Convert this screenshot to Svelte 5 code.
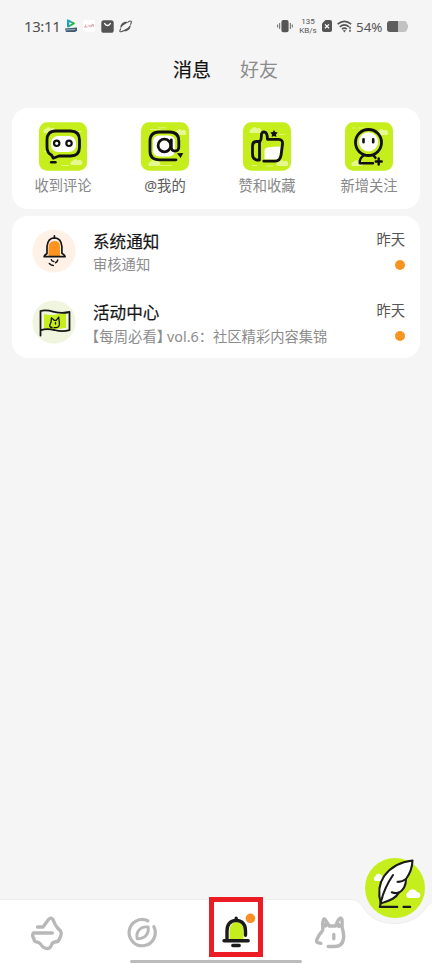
<script lang="ts">
  type Shortcut = { id: string; label: string; dark?: boolean };
  type Message = { id: string; title: string; tag?: string; text: string; time: string };

  const shortcuts: Shortcut[] = [
    { id: 'comment', label: '收到评论' },
    { id: 'at', label: '@我的', dark: true },
    { id: 'like', label: '赞和收藏' },
    { id: 'follow', label: '新增关注' }
  ];

  const messages: Message[] = [
    { id: 'system', title: '系统通知', text: '审核通知', time: '昨天' },
    { id: 'activity', title: '活动中心', tag: '【每周必看】', text: 'vol.6：社区精彩内容集锦', time: '昨天' }
  ];
</script>

{#snippet cloud(x: number, y: number)}
  <path
    transform="translate({x} {y})"
    d="M1 6a2.4 2.4 0 0 1 1.6-4A3.2 3.2 0 0 1 8 1.4 2.6 2.6 0 0 1 11 6z"
    fill="#e6f98e"
  />
{/snippet}

<div class="screen">
  <header class="status">
    <div class="status-left">
      <span class="clock">13:11</span>
      <svg class="app-a" width="14" height="14" viewBox="0 0 14 14">
        <path d="M3 1.2 Q3 .3 4.2.7L10.4 3.6Q11.5 4.5 10.4 5.3L5 8.2Q3 8.8 3 7z" fill="#27b83f" />
        <path d="M3 1.2 Q3 .3 4.2.7L7 2 4.8 8.2Q3 8.8 3 7z" fill="#169de0" />
        <path d="M5.3 3v3l2.7-1.5z" fill="#fff" />
        <path d="M1 9.4l12-1v3.3L11 13H2z" fill="#405b70" />
        <path d="M2 11l9-.5" stroke="#9cb2bf" stroke-width="1" />
      </svg>
      <svg class="app-b" width="12" height="12" viewBox="0 0 12 12">
        <rect width="12" height="12" rx="2" fill="#fff" />
        <path d="M1.5 7.5L3 4.5M2 7h2.4M5 6.6l1-1.2 1 1.2 1-1.4M8 7.2l1.6-3.4M10.2 4v3" fill="none" stroke="#d9858b" stroke-width=".8" />
      </svg>
      <svg class="app-c" width="13" height="13" viewBox="0 0 13 13">
        <rect x=".3" y=".2" width="12.4" height="12.6" rx="2.6" fill="#545454" />
        <path d="M3.7 3.6q2.8 3.8 5.6 0" fill="none" stroke="#fff" stroke-width="1.4" stroke-linecap="round" />
      </svg>
      <svg class="app-d" width="13" height="13" viewBox="0 0 13 13">
        <path d="M1.5 8.200C.8 3 6 .4 9.500 2.200L7.500 3.200Q4 4.500 1.500 8.200zM11.500 4.800c.7 5.200-4.500 7.800-8 6L5.500 9.800Q9 8.500 11.500 4.800z" fill="#555" />
        <path d="M2 8.500Q-.3 11.800 1.800 11.800 2.800 11.900 4.500 10.800M9 1.900Q11.500.5 12.200 1.300q.5 1-.8 3.500" fill="none" stroke="#555" stroke-width="1.100" />
      </svg>
    </div>
    <div class="status-right">
      <svg class="vibrate" width="16" height="14" viewBox="0 0 16 14">
        <rect x="4.4" y="1" width="7.2" height="12.2" rx="2" fill="#555" />
        <path d="M2.7 4v6M.7 5.5v3M13.3 4v6M15.3 5.5v3" stroke="#666" stroke-width="1" />
      </svg>
      <div class="speed"><span>135</span><span>KB/s</span></div>
      <svg class="sim" width="10" height="12" viewBox="0 0 10 12">
        <path d="M3.5 0H8q2 0 2 2v8q0 2-2 2H2q-2 0-2-2V3.6z" fill="#555" />
        <path d="M3 4.4l4 3.8M7 4.4L3 8.2" stroke="#fff" stroke-width="1.3" />
      </svg>
      <svg class="wifi" width="15" height="13" viewBox="0 0 15 13">
        <g fill="none" stroke="#555" stroke-width="1.6">
          <path d="M.6 4.2q6.7-5.7 13.6 0M2.8 6.8q4.6-4 9.2 0M5 9.1q2.4-2 4.8 0" />
        </g>
        <path d="M5.8 10.3h3.2L7.4 12.4z" fill="#555" />
        <path d="M13 6.8v5" stroke="#555" stroke-width="1.6" stroke-dasharray="2 1" />
      </svg>
      <span class="percent">54%</span>
      <svg class="battery" width="21" height="11" viewBox="0 0 21 11">
        <path d="M3 0h14q3 0 3 2.7l1 1.3v3l-1 1.3Q20 11 17 11H3Q0 11 0 8V3Q0 0 3 0z" fill="#c2c2c2" />
        <path d="M3 0h8v11H3Q0 11 0 8V3Q0 0 3 0z" fill="#5d5d5d" />
      </svg>
    </div>
  </header>

  <nav class="tabs">
    <span class="tab active">消息</span>
    <span class="tab">好友</span>
  </nav>

  <section class="card shortcuts">
    {#each shortcuts as s (s.id)}
      <div class="shortcut">
        <svg width="48" height="49" viewBox="0 0 48 49">
          <rect y=".3" width="48" height="48.4" rx="8" fill="#c5ee1c" />
          {#if s.id === 'comment'}
            {@render cloud(4, 5)}
            {@render cloud(31, 37)}
            <path d="M34 9.5h9M5 29.5h5M22 43.5h8" stroke="#e6f993" stroke-width=".8" />
            <rect x="12" y="14" width="25" height="16" rx="7" fill="#fff" />
            <path d="M16.500 9h15q9 0 9 9v7q0 9-9 9H20l-5.800 2.200L12.500 33q-4.500-2-4.500-8v-7Q8 9 16.500 9z" fill="none" stroke="#111" stroke-width="2.800" stroke-linejoin="round" />
            <circle cx="17.700" cy="21.300" r="2.700" fill="#fff" stroke="#111" stroke-width="2.200" />
            <circle cx="30" cy="21.300" r="2.700" fill="#fff" stroke="#111" stroke-width="2.200" />
            <path d="M12.200 40.200h4.200" stroke="#111" stroke-width="2.600" stroke-linecap="round" />
          {:else if s.id === 'at'}
            {@render cloud(33, 7)}
            {@render cloud(7, 38)}
            <path d="M9 7.500h11M17 5.800h8M19 43.500h12" stroke="#e6f993" stroke-width=".8" />
            <rect x="12" y="13.500" width="22" height="21" rx="6" fill="#fff" />
            <path d="M35 37.800H18.500q-9.500 0-9.500-8.500V19Q9 10 18 10H28.500q9.300 0 9.300 9v6q0 4-3.800 4-3.700 0-3.700-4v-7" fill="none" stroke="#111" stroke-width="2.800" stroke-linecap="round" />
            <circle cx="23.400" cy="23.500" r="6.300" fill="none" stroke="#111" stroke-width="2.800" />
            <path d="M35.900 31.200l6.400-.3-2.700 5.100z" fill="#111" />
          {:else if s.id === 'like'}
            {@render cloud(6, 5)}
            {@render cloud(33, 38)}
            <path d="M36 12.500h6M9 43.500h5M23 44h7" stroke="#e6f993" stroke-width=".8" />
            <path d="M21.500 37.500V29q-.2-3 3-3.600 6-1 13.500-1l-2.300 13z" fill="#fff" />
            <path d="M16.500 19.500V38M16.500 19.500h-3q-4 0-4 4.500v8q0 5 4 6h3M16.500 20.500q2-2.500 1.900-7-.1-3.500 2.700-3.500 3.400 0 3.300 7.300H35.500q4.500.3 4 4.700L38.100 33q-1 6-6 6.200H20.800" fill="none" stroke="#111" stroke-width="2.800" stroke-linecap="round" stroke-linejoin="round" />
            <path d="M31 8l1.200 2 2.500.6-1.700 1.800.3 2.500-2.300-1-2.300 1 .3-2.500-1.700-1.800 2.500-.6z" fill="#111" />
          {:else}
            {@render cloud(31, 7)}
            {@render cloud(6, 38)}
            <path d="M7 6h4M13 6h7" stroke="#e6f993" stroke-width=".8" />
            <circle cx="23.500" cy="19.800" r="9.600" fill="#fff" />
            <circle cx="23.500" cy="20.500" r="13" fill="none" stroke="#111" stroke-width="2.800" />
            <path d="M18.500 17.200v3M28.200 17.200v3" stroke="#111" stroke-width="2.600" stroke-linecap="round" />
            <path d="M18.500 33.500q-4 2.500-3.800 7.800h13.300M28.500 33.500q1.200 1 2 2.400M33.700 36.500v6M30.700 39.500h6" fill="none" stroke="#111" stroke-width="2.400" stroke-linecap="round" stroke-linejoin="round" />
          {/if}
        </svg>
        <span class="shortcut-label" class:dark={s.dark}>{s.label}</span>
      </div>
    {/each}
  </section>

  <section class="card messages">
    {#each messages as m (m.id)}
      <article class="message">
        <svg class="avatar" width="44" height="44" viewBox="0 0 44 44">
          {#if m.id === 'system'}
            <circle cx="22" cy="22" r="21.600" fill="#fff1e5" />
            <path d="M16.500 27.500V19q0-7 6-7t5.500 7v8.500z" fill="#ff9420" />
            <path d="M22.400 6.800v2M15 24.500q-2.600 1.700-2.900 3.200h21q-.3-1.500-3.200-3.400V17.500q-.7-8.400-7.500-8.700-6.700.3-7.400 8.700z" fill="none" stroke="#171717" stroke-width="1.700" stroke-linejoin="round" stroke-linecap="round" />
            <path d="M19.300 30.600q.5 1.800 2.500 1.800M17.300 34.500q1.500 1.800 4 1.900M23.500 33.800q1.800-.8 2.200-2.700" fill="none" stroke="#171717" stroke-width="1.500" stroke-linecap="round" />
          {:else}
            <circle cx="22" cy="22" r="21.600" fill="#f0f5e0" />
            <path d="M12 14q9 2.500 22-1.500v15.300q-11 2.500-22 .7z" fill="#c5ee1c" />
            <path d="M8.500 35.600V11q5-1.500 13.500.8 8 2 15.500.2v18.200q-7.500 2-15-.2-8-1.800-14 .3" fill="none" stroke="#171717" stroke-width="1.800" stroke-linecap="round" stroke-linejoin="round" />
            <path d="M20 27.500q-2.600-.3-2.200-2.500l1.200-2.800.4-4.400 2.800 2.500 2 0 2.500-3.200.5 4.400q1.200 6-3.200 6.200h-2M23.500 22.500v1.500" fill="none" stroke="#171717" stroke-width="1.300" stroke-linecap="round" stroke-linejoin="round" />
          {/if}
        </svg>
        <div class="body">
          <div class="title">{m.title}</div>
          <div class="text">
            {#if m.tag}<span class="tag">{m.tag}</span>{/if}{m.text}
          </div>
        </div>
        <div class="meta">
          <span class="time">{m.time}</span>
          <span class="dot"></span>
        </div>
      </article>
    {/each}
  </section>

  <div class="spacer"></div>

  <footer class="bottom">
    <svg class="bar-shape" width="432" height="65" viewBox="0 0 432 65">
      <path d="M-2 .5H350c7 0 10 3 13.500 8.500 7 11 18 15.500 31.500 15.500s24-5.500 31-15.500c2-3 4-5.500 8-7V67H-2z" fill="#fff" stroke="#eee" stroke-width="1" />
    </svg>

    <svg class="nav-icon" width="40" height="40" viewBox="27 913 40 40">
      <path d="M37.500 927h5.500l5.500-7.500q2.500-3 4.700.5 1.800 5 4 7.500l3.300 3.500q1.300 2 .4 4.500l-1.700 4q-1 2.500-4.200 2.500-3 .3-3.700 3.500-1.600 4.300-6.500 2.500-2.800-1.200-4.300-4-1.500-2-4-2-2.500-.5-2.500-3-2.400-3.500-.6-6h19" fill="none" stroke="#b8b8b8" stroke-width="3.300" stroke-linecap="round" stroke-linejoin="round" />
    </svg>

    <svg class="nav-icon" width="40" height="40" viewBox="121.500 913 40 40">
      <path d="M147.300 920.800A13.100 13.100 0 1 0 153.300 926.600" fill="none" stroke="#b8b8b8" stroke-width="3.200" stroke-linecap="round" />
      <path d="M147.700 927q-6.500-.8-9.500 3.500-2.700 3.500-1.500 8.300 6.500-.2 9.300-4 2.400-3.300 1.700-7.800z" fill="none" stroke="#b8b8b8" stroke-width="2.900" stroke-linecap="round" stroke-linejoin="round" />
    </svg>

    <div class="highlight">
      <svg width="44" height="50" viewBox="214 902 44 50">
        <path d="M229.500 939v-8.500q.5-8 7-8.500 6.800.5 7 8.500V939z" fill="#c5ee1c" />
        <path d="M227 938.500V931q0-10 9.200-10.600 9.300.6 9.300 10.600v4.300M236.200 918.200v1M224 940.700h24.200M232.800 945.500h6.400" fill="none" stroke="#1b1b1b" stroke-width="3.400" stroke-linecap="round" stroke-linejoin="round" />
        <circle cx="250.400" cy="918.300" r="4.800" fill="#fa8f25" />
      </svg>
    </div>

    <svg class="nav-icon" width="40" height="40" viewBox="310 913 40 40">
      <path d="M320.800 943.300l-3-.7q-2-.9-.8-3.300 1.500-4.300 5-7.800 1.300-1.300.8-4-.8-4.800.8-8 .6-1.200 1.800.3l3.800 6.200h6.300l2.300-5q1.500-3 3-2.800 1.400.5 1.300 3.300v6q1.600 4.800 1.600 9-.3 10-9 10h-6.500M333.800 934.500v4.200M338.800 926.500v-2M325.500 926v-1.500" fill="none" stroke="#b8b8b8" stroke-width="3.400" stroke-linecap="round" stroke-linejoin="round" />
    </svg>

    <div class="home-bar"></div>

    <svg class="fab" width="62" height="66" viewBox="364 856 62 66">
      <circle cx="395" cy="888" r="30" fill="#c5ee1c" />
      <path d="M375 881a2.800 2.800 0 0 1 .3-4.700 3.600 3.600 0 0 1 6.500-1V881zM408 898a3.200 3.200 0 0 1 0-5.800 5 5 0 0 1 9-.3 3.100 3.100 0 0 1 1 6.100z" fill="#fff" />
      <path d="M380.800 903.500c-3-11-1.800-20 3.400-27.500 6.500-9 16.800-14.200 28.300-15.500-.3 7.500-2.800 13.500-6.500 18.500 0 6-3 11.500-7.500 14-2.500 5.500-9.500 7.500-17.700 10.500z" fill="#fff" stroke="#1b1b1b" stroke-width="2.100" stroke-linejoin="round" />
      <path d="M393 875q-8.500 12.500-12 26.500l-1.200 5.400h17.500M403.500 906.900h6.700M397.500 881.800q4 .5 8.500-2.800M391.800 892.300q3.500 1.500 6.700.2" fill="none" stroke="#1b1b1b" stroke-width="2.100" stroke-linecap="round" stroke-linejoin="round" />
    </svg>
  </footer>
</div>

<style>
  :global(body) {
    background: #f5f5f5;
  }

  .screen {
    display: flex;
    flex-direction: column;
    box-sizing: border-box;
    width: 432px;
    height: 964px;
    overflow: hidden;
    background: #f5f5f5;
    font-family: 'Noto Sans', 'Noto Sans CJK SC', sans-serif;
  }

  svg {
    display: block;
    flex: none;
  }

  .status {
    display: flex;
    justify-content: space-between;
    height: 52px;
    padding: 0 24px;
    color: #555;
  }

  .status-left,
  .status-right {
    display: flex;
    align-items: center;
  }

  .clock {
    width: 35px;
    font-size: 15px;
    letter-spacing: -0.4px;
    color: #505050;
    white-space: nowrap;
  }

  .app-a,
  .app-b {
    margin-left: 5px;
  }

  .app-c {
    margin-left: 6px;
  }

  .app-d {
    margin-left: 5px;
  }

  .speed {
    display: flex;
    flex-direction: column;
    align-items: center;
    width: 18px;
    margin: 0 5px 0 6px;
    font-family: Roboto, 'Noto Sans', sans-serif;
    font-size: 8px;
    line-height: 9px;
  }

  .wifi {
    margin-left: 5px;
  }

  .percent {
    width: 27px;
    margin: 1px 4px 0 4px;
    font-size: 13.4px;
    white-space: nowrap;
  }

  .tabs {
    display: flex;
    justify-content: center;
    gap: 29px;
    height: 56px;
    padding-left: 19px;
  }

  .tab {
    margin-top: 4px;
    font-size: 19px;
    line-height: 28px;
    color: #8c8c8c;
  }

  .tab.active {
    color: #111;
    -webkit-text-stroke: 0.2px #111;
  }

  .card {
    margin: 0 12px;
    border-radius: 16px;
    background: #fff;
  }

  .shortcuts {
    display: grid;
    grid-template-columns: repeat(4, 1fr);
    height: 101px;
  }

  .shortcut {
    display: flex;
    flex-direction: column;
    align-items: center;
    padding-top: 14px;
  }

  .shortcut-label {
    margin-top: 5px;
    font-size: 14.3px;
    line-height: 20px;
    color: #888;
  }

  .shortcut-label.dark {
    color: #5c5c5c;
  }

  .messages {
    height: 142px;
    margin-top: 7px;
  }

  .message {
    display: flex;
    height: 71px;
    box-sizing: border-box;
    padding: 13px 15px 0 20px;
  }

  .body {
    flex: 1;
    margin-left: 17px;
  }

  .title {
    margin-top: 1px;
    font-size: 16.6px;
    line-height: 24px;
    color: #151515;
    -webkit-text-stroke: 0.2px #151515;
  }

  .text {
    height: 20px;
    font-size: 14.3px;
    line-height: 20px;
    margin-top: 1px;
    color: #8c8c8c;
    white-space: nowrap;
  }

  .tag {
    margin: 0 3px 0 -1px;
    font-family: 'Noto Sans CJK SC', sans-serif;
    font-feature-settings: 'halt';
    letter-spacing: 0.1px;
  }

  .meta {
    display: flex;
    flex-direction: column;
    align-items: flex-end;
  }

  .time {
    margin-top: 1px;
    font-size: 14.3px;
    line-height: 20px;
    color: #555;
  }

  .dot {
    width: 10px;
    height: 10px;
    margin-top: 10px;
    border-radius: 50%;
    background: #fa9420;
  }

  .spacer {
    flex: 1;
  }

  .bottom {
    position: relative;
    display: flex;
    height: 65px;
    padding-left: 27px;
  }

  .bar-shape {
    position: absolute;
    left: 0;
    top: 0;
  }

  .nav-icon {
    position: relative;
    margin: 14px 54.5px 0 0;
  }

  .highlight {
    position: relative;
    flex: none;
    margin: -2px 47px 0 -7px;
    width: 44px;
    height: 50px;
    border: 5px solid #ec1c24;
    background: #fff;
  }

  .home-bar {
    position: absolute;
    left: 130px;
    bottom: 1px;
    width: 172px;
    height: 3px;
    border-radius: 2px;
    background: #bcbcbc;
  }

  .fab {
    position: absolute;
    left: 364px;
    top: -43px;
  }
</style>
